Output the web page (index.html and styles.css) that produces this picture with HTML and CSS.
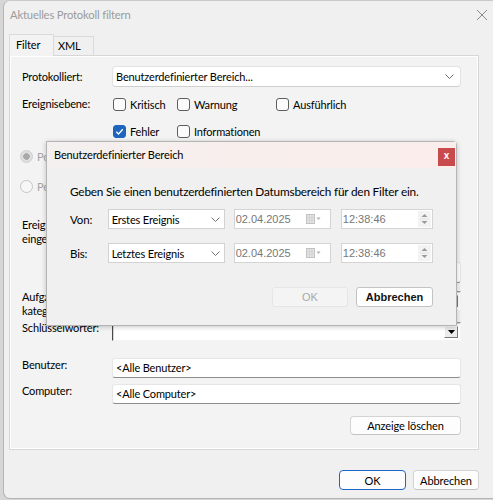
FILE: index.html
```html
<!DOCTYPE html>
<html lang="de">
<head>
<meta charset="utf-8">
<title>Aktuelles Protokoll filtern</title>
<link rel="stylesheet" href="styles.css">
</head>
<body>
<div class="window">
  <div class="titlebar">
    <span class="title">Aktuelles Protokoll filtern</span>
    <svg class="win-close" width="12" height="12" viewBox="0 0 12 12"><path d="M1 1L11 11M11 1L1 11" stroke="#8a8a8a" stroke-width="1" fill="none"/></svg>
  </div>

  <div class="tabs">
    <div class="tab tab-active">Filter</div>
    <div class="tab">XML</div>
  </div>

  <div class="panel">
    <div class="row row-logged">
      <span class="lbl">Protokolliert:</span>
      <div class="select">
        <span>Benutzerdefinierter Bereich...</span>
        <svg class="chev" width="9" height="5" viewBox="0 0 9 5"><path d="M0.5 0.5L4.5 4.5L8.5 0.5" stroke="#6a6a6a" fill="none"/></svg>
      </div>
    </div>

    <div class="row row-levels">
      <span class="lbl lbl-levels">Ereignisebene:</span>
      <div class="checks">
        <label class="check"><span class="box"></span>Kritisch</label>
        <label class="check"><span class="box"></span>Warnung</label>
        <label class="check"><span class="box"></span>Ausführlich</label>
        <label class="check"><span class="box box-on"><svg width="11" height="11" viewBox="0 0 11 11"><path d="M2.3 5.8L4.5 8L8.8 3.2" stroke="#fff" stroke-width="1.3" fill="none"/></svg></span>Fehler</label>
        <label class="check"><span class="box"></span>Informationen</label>
      </div>
    </div>

    <div class="radio-row radio-row-first"><span class="radio radio-on"></span><span class="muted">Per Protokoll</span></div>
    <div class="radio-row radio-row-second"><span class="radio"></span><span class="muted">Per Quelle</span></div>

    <div class="desc">Ereignis-IDs<br>eingeschlossen/ausgeschlossen:</div>
    <div class="row row-ids"><span class="lbl"></span><div class="textbox"></div></div>

    <div class="row row-task">
      <span class="lbl">Aufgaben-<br>kategorie:</span>
      <div class="classic-combo"><span class="drop-btn"></span></div>
    </div>

    <div class="row row-keys">
      <span class="lbl">Schlüsselwörter:</span>
      <div class="classic-combo classic-keys"><span class="drop-btn"><svg width="7" height="4" viewBox="0 0 7 4"><path d="M0 0H7L3.5 4Z" fill="#000"/></svg></span></div>
    </div>

    <div class="row row-user">
      <span class="lbl">Benutzer:</span>
      <div class="textbox">&lt;Alle Benutzer&gt;</div>
    </div>

    <div class="row row-computer">
      <span class="lbl">Computer:</span>
      <div class="textbox">&lt;Alle Computer&gt;</div>
    </div>

    <div class="row row-clear">
      <button class="btn btn-clear">Anzeige löschen</button>
    </div>
  </div>

  <div class="footer">
    <button class="btn btn-ok">OK</button>
    <button class="btn btn-cancel">Abbrechen</button>
  </div>
</div>

<div class="dlg">
  <div class="dlg-titlebar">
    Benutzerdefinierter Bereich
    <span class="dlg-close">x</span>
  </div>
  <div class="dlg-body">
    <p class="dlg-text">Geben Sie einen benutzerdefinierten Datumsbereich für den Filter ein.</p>

    <div class="dlg-row dlg-row-from">
      <span class="dlg-label">Von:</span>
      <div class="combo">
        <span>Erstes Ereignis</span>
        <svg class="chev" width="9" height="5" viewBox="0 0 9 5"><path d="M0.5 0.5L4.5 4.5L8.5 0.5" stroke="#707070" fill="none"/></svg>
      </div>
      <div class="datebox">
        <span>02.04.2025</span>
        <span class="cal"><svg width="15" height="10" viewBox="0 0 15 10"><rect x="0.5" y="0.5" width="8" height="9" fill="#e4e4e4" stroke="#c2c2c2"/><path d="M1 3.5H8M1 6H8M3.5 1V9M6 1V9" stroke="#cfcfcf" stroke-width="0.8"/><path d="M10.5 3.5H14.5L12.5 6Z" fill="#b0b0b0"/></svg></span>
      </div>
      <div class="timebox">
        <span>12:38:46</span>
        <span class="spin"><svg width="9" height="14" viewBox="0 0 9 14"><path d="M1.5 5L4.5 2L7.5 5Z" fill="#9a9a9a"/><path d="M1.5 9L4.5 12L7.5 9Z" fill="#9a9a9a"/><path d="M0 7H9" stroke="#e2e2e2"/></svg></span>
      </div>
    </div>

    <div class="dlg-row dlg-row-to">
      <span class="dlg-label">Bis:</span>
      <div class="combo">
        <span>Letztes Ereignis</span>
        <svg class="chev" width="9" height="5" viewBox="0 0 9 5"><path d="M0.5 0.5L4.5 4.5L8.5 0.5" stroke="#707070" fill="none"/></svg>
      </div>
      <div class="datebox">
        <span>02.04.2025</span>
        <span class="cal"><svg width="15" height="10" viewBox="0 0 15 10"><rect x="0.5" y="0.5" width="8" height="9" fill="#e4e4e4" stroke="#c2c2c2"/><path d="M1 3.5H8M1 6H8M3.5 1V9M6 1V9" stroke="#cfcfcf" stroke-width="0.8"/><path d="M10.5 3.5H14.5L12.5 6Z" fill="#b0b0b0"/></svg></span>
      </div>
      <div class="timebox">
        <span>12:38:46</span>
        <span class="spin"><svg width="9" height="14" viewBox="0 0 9 14"><path d="M1.5 5L4.5 2L7.5 5Z" fill="#9a9a9a"/><path d="M1.5 9L4.5 12L7.5 9Z" fill="#9a9a9a"/><path d="M0 7H9" stroke="#e2e2e2"/></svg></span>
      </div>
    </div>

    <div class="dlg-buttons">
      <button class="dbtn dbtn-disabled">OK</button>
      <button class="dbtn dbtn-cancel">Abbrechen</button>
    </div>
  </div>
</div>
</body>
</html>
```

FILE: styles.css
```css
* { box-sizing: border-box; }

body {
  margin: 0;
  width: 493px;
  height: 500px;
  overflow: hidden;
  position: relative;
  background: #d6d6d6;
  font-family: Lato, "Noto Sans", sans-serif;
  font-size: 11px;
  letter-spacing: -0.15px;
  color: #000;
}

/* ---------- main window ---------- */
.window {
  margin-left: 3px;
  height: 499px;
  width: 500px;
  background: #f0f0f0;
  border-left: 1px solid #b5b5b5;
  border-top: 1px solid #c9c9c9;
  border-bottom: 1px solid #b5b5b5;
  border-top-left-radius: 7px;
  border-bottom-left-radius: 7px;
  display: flex;
  flex-direction: column;
}

.titlebar {
  height: 33px;
  display: flex;
  align-items: flex-start;
  padding: 6px 0 0 6px;
  position: relative;
}
.title {
  color: #9b9b9b;
  font-size: 11.2px;
  line-height: 16px;
}
.win-close {
  position: absolute;
  left: 472px;
  top: 8px;
}

.tabs {
  display: flex;
  align-items: flex-end;
  height: 21px;
  margin-left: 5px;
  position: relative;
  z-index: 1;
}
.tab {
  height: 19px;
  width: 40px;
  padding-left: 4px;
  line-height: 18px;
  border: 1px solid #dadada;
  border-bottom: none;
  border-left: none;
  background: #f0f0f0;
}
.tab-active {
  height: 22px;
  width: 45px;
  margin-bottom: -1px;
  padding-left: 6px;
  line-height: 20px;
  border-left: 1px solid #dadada;
  background: #f3f3f3;
}

.panel {
  width: 470px;
  height: 395px;
  margin-left: 5px;
  border: 1px solid #d7d7d7;
  box-shadow: inset 1px 1px 0 #fff, inset -1px -1px 0 #fff;
  background: #f3f3f3;
  padding: 10px 17px 0 12px;
  display: flex;
  flex-direction: column;
}

.row {
  display: flex;
  align-items: flex-start;
}
.lbl {
  width: 90px;
  flex: none;
  line-height: 14px;
}

.row-logged { height: 21px; align-items: center; }
.select {
  flex: 1;
  height: 21px;
  background: #fff;
  border: 1px solid #e3e3e3;
  border-bottom-color: #cfcfcf;
  border-radius: 4px;
  display: flex;
  align-items: center;
  justify-content: space-between;
  padding: 0 6px 0 3px;
}

.row-levels { margin-top: 7px; }
.lbl-levels { line-height: 20px; }
.checks {
  display: grid;
  grid-template-columns: 64px 99px auto;
  grid-auto-rows: 20px;
  row-gap: 7px;
  padding-left: 1px;
}
.check {
  display: flex;
  align-items: center;
  gap: 4px;
}
.box {
  width: 13px;
  height: 13px;
  border: 1px solid #5e5e5e;
  border-radius: 3px;
  background: #fbfbfb;
  display: flex;
  align-items: center;
  justify-content: center;
}
.box-on {
  background: #1e65bd;
  border-color: #1e65bd;
}

.radio-row {
  display: flex;
  align-items: center;
  height: 20px;
  margin-left: -2px;
  gap: 4px;
}
.radio-row-first { margin-top: 5px; }
.radio-row-second { margin-top: 10px; }
.radio {
  width: 13px;
  height: 13px;
  border-radius: 50%;
  border: 1px solid #c6c6c6;
  background: #f7f7f7;
}
.radio-on {
  background: radial-gradient(circle, #a9a9a9 0 3px, #dedede 3.6px);
  border-color: #cfcfcf;
}
.muted { color: #a3a3a3; }

.desc {
  margin-top: 22px;
  line-height: 14px;
  white-space: nowrap;
}

.row-ids { margin-top: 16px; }
.textbox {
  flex: 1;
  height: 20px;
  background: #fff;
  border: 1px solid #e6e6e6;
  border-bottom-color: #8c8c8c;
  border-radius: 3px;
  padding-left: 3px;
  line-height: 18px;
}
.row-ids .textbox { height: 21px; }

.row-task { margin-top: 7px; height: 28px; }
.classic-combo {
  flex: 1;
  height: 20px;
  margin-top: 1px;
  background: #fff;
  border: 1px solid;
  border-color: #9a9a9a #f4f4f4 #f4f4f4 #9a9a9a;
  box-shadow: inset 1px 1px 0 #d6d6d6;
  display: flex;
  justify-content: flex-end;
  align-items: center;
  padding-right: 2px;
}
.drop-btn {
  width: 14px;
  height: 12px;
  background: #ececec;
  border: 1px solid;
  border-color: #fff #7a7a7a #7a7a7a #fff;
  display: flex;
  align-items: center;
  justify-content: center;
}

.row-keys { margin-top: 3px; height: 20px; }
.classic-keys { height: 19px; border-left-color: #4a4a4a; }

.row-user { margin-top: 17px; }
.row-computer { margin-top: 6px; }

.row-clear { margin-top: 12px; justify-content: flex-end; }

.btn {
  font-family: Lato, "Noto Sans", sans-serif;
  font-size: 11px;
  letter-spacing: -0.1px;
  color: #000;
  height: 19px;
  padding: 0;
  background: #fdfdfd;
  border: 1px solid #d3d3d3;
  border-bottom-color: #c2c2c2;
  border-radius: 4px;
}
.btn-clear { width: 111px; }

.footer {
  width: 470px;
  margin: 20px 0 0 5px;
  display: flex;
  justify-content: flex-end;
  gap: 7px;
}
.btn-ok {
  width: 67px;
  height: 20px;
  border: 1.5px solid #1d66c4;
}
.btn-cancel { width: 66px; height: 20px; }

/* ---------- custom range dialog ---------- */
.dlg {
  position: absolute;
  left: 46px;
  top: 141px;
  width: 411px;
  height: 185px;
  background: #f0f0f0;
  border: 1px solid #b4b4b4;
  border-radius: 0 4px 0 0;
  box-shadow: 0 1px 5px rgba(0, 0, 0, 0.22);
}
.dlg-titlebar {
  height: 26px;
  line-height: 26px;
  padding-left: 7px;
  position: relative;
  background: linear-gradient(to right, #f3f0ef, #f9eeec 60%, #faedeb);
}
.dlg-close {
  position: absolute;
  left: 391px;
  top: 6px;
  width: 17px;
  height: 18px;
  background: #c94a4c;
  color: #fff;
  font-family: "Liberation Sans", Arial, sans-serif;
  font-weight: bold;
  font-size: 10px;
  letter-spacing: 0;
  line-height: 16px;
  text-align: center;
}

.dlg-body { padding: 16px 23px 0; }
.dlg-text {
  margin: 0;
  font-size: 11.8px;
  letter-spacing: -0.2px;
  line-height: 16px;
  white-space: nowrap;
}

.dlg-row {
  display: flex;
  align-items: center;
  height: 20px;
}
.dlg-row-from { margin-top: 9px; }
.dlg-row-to { margin-top: 14px; }
.dlg-label {
  width: 38px;
  font-size: 11.5px;
}

.combo {
  width: 118px;
  height: 20px;
  margin-right: 9px;
  background: #fff;
  border: 1px solid #d2d2d2;
  display: flex;
  align-items: center;
  justify-content: space-between;
  padding: 0 4px 0 3px;
}

.datebox, .timebox {
  height: 20px;
  background: #fff;
  border: 1px solid #d4d4d4;
  display: flex;
  align-items: center;
  justify-content: space-between;
  font-family: "Liberation Sans", Arial, sans-serif;
  font-size: 11px;
  letter-spacing: 0;
  color: #777;
  padding-left: 1px;
}
.datebox {
  width: 98px;
  margin-right: 10px;
  padding-right: 9px;
}
.cal { display: flex; }
.timebox {
  width: 93px;
  padding-right: 1px;
}
.spin {
  width: 13px;
  height: 16px;
  background: #f3f3f3;
  display: flex;
  align-items: center;
  justify-content: center;
}

.dlg-buttons {
  margin-top: 24px;
  display: flex;
  justify-content: flex-end;
  gap: 8px;
}
.dbtn {
  height: 20px;
  padding: 0;
  font-family: "Liberation Sans", Arial, sans-serif;
  font-size: 11px;
  letter-spacing: 0;
  border-radius: 3px;
}
.dbtn-disabled {
  width: 76px;
  background: #f4f4f4;
  border: 1px solid #e6e6e6;
  color: #a9a9a9;
}
.dbtn-cancel {
  width: 77px;
  background: #fff;
  border: 1px solid #c3c3c3;
  color: #111;
  font-weight: 600;
}
```
